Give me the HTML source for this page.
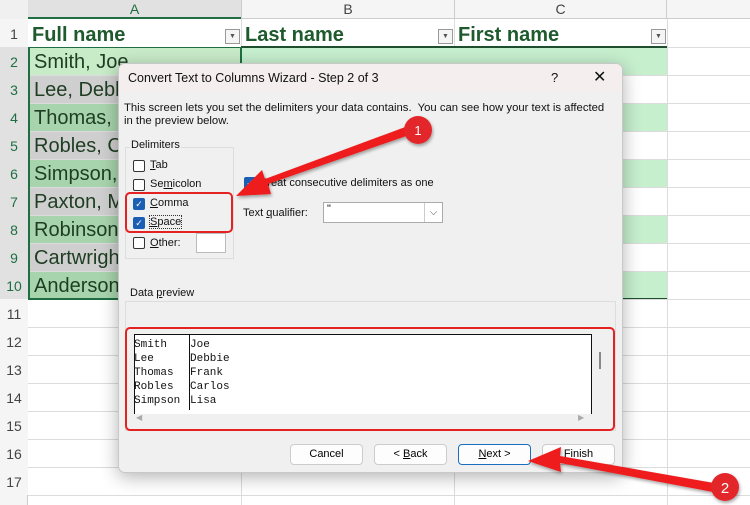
<!DOCTYPE html>
<html><head><meta charset="utf-8"><style>
*{margin:0;padding:0;box-sizing:border-box}
body{width:750px;height:505px;overflow:hidden;background:#fff;font-family:"Liberation Sans",sans-serif;position:relative}
.a{position:absolute}
.rh{position:absolute;left:0;width:28px;text-align:center;color:#444;font-size:14px;background:#f5f5f5}
.cell{position:absolute;font-size:20px;color:#1e3d22;padding-left:4px;line-height:28px;white-space:nowrap;overflow:hidden}
.hl{position:absolute;left:28px;right:0;height:1px;background:#dcdcdc}
.vl{position:absolute;top:19px;bottom:0;width:1px;background:#dcdcdc}
.dlg{font-family:"Liberation Sans",sans-serif;font-size:11px;color:#111;white-space:nowrap}
.cb{position:absolute;width:12px;height:12px;border:1px solid #333;border-radius:2px;background:#fff;color:#fff;font-size:9px;line-height:10px;text-align:center}
.cbx{background:#1a5fb4;border-color:#1a5fb4}
.btn{position:absolute;top:444px;width:73px;height:21px;border:1px solid #ccc;border-radius:4px;background:#fdfdfd;text-align:center;line-height:19px;font-family:"Liberation Sans",sans-serif;font-size:11px}
.mono{font-family:"Liberation Mono",monospace;font-size:11px;line-height:14px}
</style></head><body>
<div class="a" style="left:0;top:0;width:750px;height:19px;background:#f5f5f5;border-bottom:1px solid #ccc"></div>
<div class="a" style="left:28px;top:0;width:213px;height:19px;background:#e1e1e1;border-bottom:2px solid #1f6e43;text-align:center;font-size:14px;line-height:19px;color:#1f6e43">A</div>
<div class="a" style="left:241px;top:0;width:213px;height:19px;text-align:center;font-size:14px;line-height:19px;color:#444;border-left:1px solid #ccc">B</div>
<div class="a" style="left:454px;top:0;width:213px;height:19px;text-align:center;font-size:14px;line-height:19px;color:#444;border-left:1px solid #ccc;border-right:1px solid #ccc">C</div>
<div class="a" style="left:0;top:0;width:28px;height:19px;background:#f0f0f0"></div>
<div class="a" style="left:0;top:19px;width:28px;height:486px;background:#f5f5f5;border-right:1px solid #ccc"></div>
<div class="rh" style="top:19px;height:28px;line-height:30px">1</div>
<div class="rh" style="top:47px;height:28px;line-height:30px;background:#e1e1e1;color:#1f6e43">2</div>
<div class="rh" style="top:75px;height:28px;line-height:30px;background:#e1e1e1;color:#1f6e43">3</div>
<div class="rh" style="top:103px;height:28px;line-height:30px;background:#e1e1e1;color:#1f6e43">4</div>
<div class="rh" style="top:131px;height:28px;line-height:30px;background:#e1e1e1;color:#1f6e43">5</div>
<div class="rh" style="top:159px;height:28px;line-height:30px;background:#e1e1e1;color:#1f6e43">6</div>
<div class="rh" style="top:187px;height:28px;line-height:30px;background:#e1e1e1;color:#1f6e43">7</div>
<div class="rh" style="top:215px;height:28px;line-height:30px;background:#e1e1e1;color:#1f6e43">8</div>
<div class="rh" style="top:243px;height:28px;line-height:30px;background:#e1e1e1;color:#1f6e43">9</div>
<div class="rh" style="top:271px;height:28px;line-height:30px;background:#e1e1e1;color:#1f6e43">10</div>
<div class="rh" style="top:299px;height:28px;line-height:30px">11</div>
<div class="rh" style="top:327px;height:28px;line-height:30px">12</div>
<div class="rh" style="top:355px;height:28px;line-height:30px">13</div>
<div class="rh" style="top:383px;height:28px;line-height:30px">14</div>
<div class="rh" style="top:411px;height:28px;line-height:30px">15</div>
<div class="rh" style="top:439px;height:28px;line-height:30px">16</div>
<div class="rh" style="top:467px;height:28px;line-height:30px">17</div>
<div class="vl" style="left:241px"></div><div class="vl" style="left:454px"></div><div class="vl" style="left:667px"></div>
<div class="hl" style="top:47px"></div><div class="hl" style="top:75px"></div><div class="hl" style="top:103px"></div><div class="hl" style="top:131px"></div><div class="hl" style="top:159px"></div><div class="hl" style="top:187px"></div><div class="hl" style="top:215px"></div><div class="hl" style="top:243px"></div><div class="hl" style="top:271px"></div><div class="hl" style="top:299px"></div><div class="hl" style="top:327px"></div><div class="hl" style="top:355px"></div><div class="hl" style="top:383px"></div><div class="hl" style="top:411px"></div><div class="hl" style="top:439px"></div><div class="hl" style="top:467px"></div><div class="hl" style="top:495px"></div>
<div class="a" style="left:241px;top:48px;width:426px;height:27px;background:#c6efce"></div>
<div class="a" style="left:241px;top:104px;width:426px;height:27px;background:#c6efce"></div>
<div class="a" style="left:241px;top:160px;width:426px;height:27px;background:#c6efce"></div>
<div class="a" style="left:241px;top:216px;width:426px;height:27px;background:#c6efce"></div>
<div class="a" style="left:241px;top:272px;width:426px;height:27px;background:#c6efce"></div>
<div class="a" style="left:241px;top:46px;width:426px;height:2px;background:#1e4e2e"></div>
<div class="a" style="left:241px;top:298px;width:426px;height:1px;background:#1e4e2e"></div>
<div class="cell" style="left:28px;top:21px;font-weight:bold;color:#1e5a2e">Full name</div>
<div class="cell" style="left:241px;top:21px;font-weight:bold;color:#1e5a2e">Last name</div>
<div class="cell" style="left:454px;top:21px;font-weight:bold;color:#1e5a2e">First name</div>
<div class="a" style="left:225px;top:29px;width:15px;height:15px;border:1px solid #999;background:#f5f5f5;font-size:7px;text-align:center;line-height:14px;color:#555">▼</div>
<div class="a" style="left:438px;top:29px;width:15px;height:15px;border:1px solid #999;background:#f5f5f5;font-size:7px;text-align:center;line-height:14px;color:#555">▼</div>
<div class="a" style="left:651px;top:29px;width:15px;height:15px;border:1px solid #999;background:#f5f5f5;font-size:7px;text-align:center;line-height:14px;color:#555">▼</div>
<div class="a" style="left:28px;top:47px;width:214px;height:253px;border:2px solid #1f6e43"></div>
<div class="cell" style="left:30px;top:48px;width:210px;height:27px;background:#c8ebc8">Smith, Joe</div>
<div class="cell" style="left:30px;top:76px;width:210px;height:27px;background:#cfcfcf">Lee, Debbie</div>
<div class="cell" style="left:30px;top:104px;width:210px;height:27px;background:#a8d4ad">Thomas, Frank</div>
<div class="cell" style="left:30px;top:132px;width:210px;height:27px;background:#cfcfcf">Robles, Carlos</div>
<div class="cell" style="left:30px;top:160px;width:210px;height:27px;background:#a8d4ad">Simpson, Lisa</div>
<div class="cell" style="left:30px;top:188px;width:210px;height:27px;background:#cfcfcf">Paxton, Mark</div>
<div class="cell" style="left:30px;top:216px;width:210px;height:27px;background:#a8d4ad">Robinson, Al</div>
<div class="cell" style="left:30px;top:244px;width:210px;height:27px;background:#cfcfcf">Cartwright, Jo</div>
<div class="cell" style="left:30px;top:272px;width:210px;height:26px;background:#a8d4ad">Anderson, Ty</div>
<div class="a dlg" style="left:118px;top:63px;width:505px;height:410px;background:#f0f0f0;border:1px solid #c8c8c8;border-radius:7px;box-shadow:0 4px 18px rgba(0,0,0,.3);overflow:hidden">
 <div class="a" style="left:0;top:0;width:505px;height:28px;background:#f4eeee"></div>
 <div class="a" style="left:9px;top:7px;font-size:12.5px">Convert Text to Columns Wizard - Step 2 of 3</div>
 <div class="a" style="left:432px;top:6px;font-size:13px">?</div>
 <div class="a" style="left:474px;top:3px;font-size:16px">✕</div>
 <div class="a" style="left:5px;top:38px;line-height:13px;font-size:11.3px">This screen lets you set the delimiters your data contains.&nbsp; You can see how your text is affected<br>in the preview below.</div>
 <div class="a" style="left:6px;top:83px;width:109px;height:112px;border:1px solid #ddd"></div>
 <div class="a" style="left:11px;top:75px;background:#f0f0f0;padding:0 1px">Delimiters</div>
 <div class="cb" style="left:14px;top:96px"></div><div class="a" style="left:31px;top:95px"><u>T</u>ab</div>
 <div class="cb" style="left:14px;top:115px"></div><div class="a" style="left:31px;top:114px">Se<u>m</u>icolon</div>
 <div class="cb cbx" style="left:14px;top:134px">✓</div><div class="a" style="left:31px;top:133px"><u>C</u>omma</div>
 <div class="cb cbx" style="left:14px;top:153px">✓</div><div class="a" style="left:31px;top:152px;outline:1px dotted #333"><u>S</u>pace</div>
 <div class="cb" style="left:14px;top:173px"></div><div class="a" style="left:31px;top:173px"><u>O</u>ther:</div>
 <div class="a" style="left:77px;top:169px;width:30px;height:20px;background:#fff;border:1px solid #bbb"></div>
 <div class="cb cbx" style="left:125px;top:113px">✓</div><div class="a" style="left:142px;top:113px">Treat consecutive delimiters as one</div>
 <div class="a" style="left:124px;top:143px">Text <u>q</u>ualifier:</div>
 <div class="a" style="left:204px;top:138px;width:120px;height:21px;background:#fff;border:1px solid #aaa;padding-left:3px">"</div>
 <div class="a" style="left:305px;top:139px;width:18px;height:19px;border-left:1px solid #ccc;text-align:center;font-size:10px;color:#555;line-height:19px">⌵</div>
 <div class="a" style="left:6px;top:237px;width:491px;height:130px;border:1px solid #ddd"></div>
 <div class="a" style="left:11px;top:223px">Data <u>p</u>review</div>
 <div class="a" style="left:15px;top:270px;width:458px;height:80px;background:#fff;border:1px solid #111;border-bottom:none"></div>
 <div class="a" style="left:70px;top:271px;width:1px;height:75px;background:#111"></div>
 <div class="a mono" style="left:15px;top:274px">Smith<br>Lee<br>Thomas<br>Robles<br>Simpson</div>
 <div class="a mono" style="left:71px;top:274px">Joe<br>Debbie<br>Frank<br>Carlos<br>Lisa</div>
 <div class="a" style="left:480px;top:288px;width:2px;height:17px;background:#888"></div>
 <div class="a" style="left:17px;top:349px;font-size:8px;color:#aaa">◀</div>
 <div class="a" style="left:459px;top:349px;font-size:8px;color:#aaa">▶</div>
</div>
<div class="a" style="left:125px;top:327px;width:490px;height:104px;border:2px solid #e52222;border-radius:5px"></div>
<div class="a" style="left:125px;top:192px;width:108px;height:41px;border:2px solid #e52222;border-radius:5px"></div>
<div class="btn" style="left:290px">Cancel</div>
<div class="btn" style="left:374px">&lt; <u>B</u>ack</div>
<div class="btn" style="left:458px;border-color:#1a6ec0"><u>N</u>ext &gt;</div>
<div class="btn" style="left:542px">Finish</div>
<svg class="a" style="left:0;top:0" width="750" height="505">
 <defs><filter id="s"><feDropShadow dx="1" dy="2" stdDeviation="1.5" flood-opacity=".35"/></filter></defs>
 <g filter="url(#s)" fill="#ee1c1c">
  <polygon points="408,126 412,134 268,184 271,194 236,196 262,170 265,179"/>
  <circle cx="418" cy="130" r="14" fill="#e3262b"/>
  <polygon points="714,483 713,492 560,463 561,472 528,461 561,447 560,456"/>
  <circle cx="725" cy="487" r="14" fill="#e3262b"/>
 </g>
 <text x="418" y="135" fill="#fff" font-size="13" text-anchor="middle" font-family="Liberation Sans">1</text>
 <text x="725" y="493" fill="#fff" font-size="15" text-anchor="middle" font-family="Liberation Sans">2</text>
</svg>
</body></html>
